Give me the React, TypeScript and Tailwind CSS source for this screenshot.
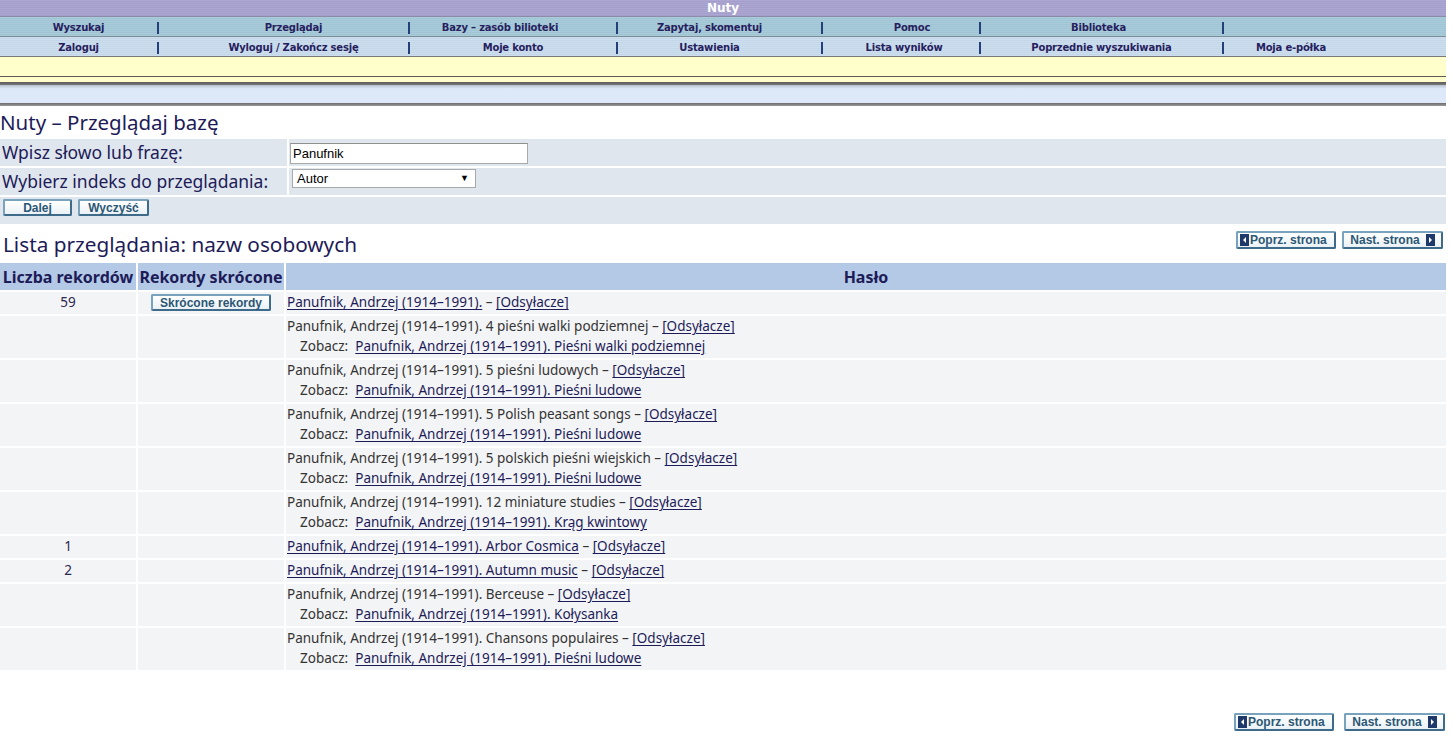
import { FC, ReactNode } from "react";

const navy = "text-[#1d1b58]";

const NAV_COLS = "grid grid-cols-[157px_251px_208px_205px_158px_243px_1fr]";

interface NavCell {
  label: string;
  pad: string;
}

const topNav: NavCell[] = [
  { label: "Wyszukaj", pad: "" },
  { label: "Przeglądaj", pad: "pl-[20px]" },
  { label: "Bazy – zasób bilioteki", pad: "pr-[26px]" },
  { label: "Zapytaj, skomentuj", pad: "pr-[20px]" },
  { label: "Pomoc", pad: "pl-[22px]" },
  { label: "Biblioteka", pad: "pr-[6px]" },
  { label: "", pad: "" },
];

const bottomNav: NavCell[] = [
  { label: "Zaloguj", pad: "" },
  { label: "Wyloguj / Zakończ sesję", pad: "pl-[20px]" },
  { label: "Moje konto", pad: "" },
  { label: "Ustawienia", pad: "pr-[20px]" },
  { label: "Lista wyników", pad: "pl-[6px]" },
  { label: "Poprzednie wyszukiwania", pad: "" },
  { label: "Moja e-półka", pad: "pr-[88px]" },
];

const NavRow: FC<{ cells: NavCell[]; bg: string }> = ({ cells, bg }) => (
  <div className={`${NAV_COLS} h-[19px] ${bg}`}>
    {cells.map((c, i) => (
      <div key={i} className="flex items-center h-full pt-[2px]">
        {i > 0 && <span className="w-[2px] h-[12px] bg-[#24407a] shrink-0" />}
        <span
          className={`flex-1 flex justify-center ${c.pad} font-bold text-[10px] leading-none text-[#26215e] font-['DejaVu_Sans',sans-serif] tracking-[-0.2px]`}
        >
          {c.label}
        </span>
      </div>
    ))}
  </div>
);

const BlueButton: FC<{ children: ReactNode; className?: string }> = ({
  children,
  className = "",
}) => (
  <button
    className={`h-[17px] flex items-center justify-center border-2 border-[#79a2bd] border-b-[#3d6b89] border-r-[#3d6b89] bg-[linear-gradient(#ffffff,#eaf1f6)] rounded-[2px] font-bold text-[12px] leading-none text-[#2c5775] font-['Liberation_Sans',Arial,sans-serif] ${className}`}
  >
    {children}
  </button>
);

const Arrow: FC<{ dir: "left" | "right" }> = ({ dir }) => (
  <svg width="9" height="12" viewBox="0 0 9 12" className="shrink-0">
    <rect width="9" height="12" fill="#1d3a6a" />
    {dir === "left" ? (
      <polygon points="6,3 6,9 3,6" fill="#ffffff" />
    ) : (
      <polygon points="3,3 3,9 6,6" fill="#ffffff" />
    )}
  </svg>
);

const PageButtons: FC<{ gap: string }> = ({ gap }) => (
  <div className={`flex ${gap}`}>
    <BlueButton className="w-[100px] h-[18px] gap-[1px] pl-[2px] justify-start">
      <Arrow dir="left" />
      <span>Poprz. strona</span>
    </BlueButton>
    <BlueButton className="w-[101px] h-[18px] gap-[6px]">
      <span>Nast. strona</span>
      <Arrow dir="right" />
    </BlueButton>
  </div>
);

const L: FC<{ children: ReactNode }> = ({ children }) => (
  <a className="text-[#1d1b58] underline underline-offset-2 cursor-pointer">{children}</a>
);

interface Entry {
  count?: string;
  short?: boolean;
  head: string;
  linked: boolean;
  see?: string;
}

const P = "Panufnik, Andrzej (1914–1991).";

const entries: Entry[] = [
  { count: "59", short: true, head: P, linked: true },
  { head: `${P} 4 pieśni walki podziemnej`, linked: false, see: `${P} Pieśni walki podziemnej` },
  { head: `${P} 5 pieśni ludowych`, linked: false, see: `${P} Pieśni ludowe` },
  { head: `${P} 5 Polish peasant songs`, linked: false, see: `${P} Pieśni ludowe` },
  { head: `${P} 5 polskich pieśni wiejskich`, linked: false, see: `${P} Pieśni ludowe` },
  { head: `${P} 12 miniature studies`, linked: false, see: `${P} Krąg kwintowy` },
  { count: "1", head: `${P} Arbor Cosmica`, linked: true },
  { count: "2", head: `${P} Autumn music`, linked: true },
  { head: `${P} Berceuse`, linked: false, see: `${P} Kołysanka` },
  { head: `${P} Chansons populaires`, linked: false, see: `${P} Pieśni ludowe` },
];

const cell = "bg-[#f3f4f6]";

export default function App() {
  return (
    <div className="w-[1446px] bg-white min-h-[737px] font-['Noto_Sans',sans-serif]">
      {/* header bars */}
      <div className="h-[17px] border-b border-[#8d8aa8] flex items-center justify-center bg-[repeating-linear-gradient(180deg,#aca8d3_0px,#aca8d3_1px,#a39fca_1px,#a39fca_2px)]">
        <span className="text-white font-bold text-[12px] font-['DejaVu_Sans',sans-serif] leading-none">
          Nuty
        </span>
      </div>
      <div className="border-b border-[#7d8b93]">
        <NavRow
          cells={topNav}
          bg="bg-[repeating-linear-gradient(180deg,#a9ccdb_0px,#a9ccdb_1px,#a0c4d4_1px,#a0c4d4_2px)]"
        />
      </div>
      <div className="border-b border-[#77797b]">
        <NavRow
          cells={bottomNav}
          bg="bg-[repeating-linear-gradient(180deg,#cddfee_0px,#cddfee_1px,#c4d7e8_1px,#c4d7e8_2px)]"
        />
      </div>
      <div className="h-[20px] bg-[#ffffcc] border-b border-[#5d5d55]" />
      <div className="h-[5px] bg-[#ffffcc]" />
      <div className="h-[3px] bg-[linear-gradient(#5a5a5a,#7a7a7a)]" />
      <div className="h-[18px] bg-[linear-gradient(#b4c0ce,#dde9f8_20%,#dde9f8)]" />
      <div className="h-[3px] bg-[linear-gradient(#6b6b6b,#9a9a9a)]" />

      {/* title */}
      <div className="h-[33px] flex items-center">
        <h1 className={`text-[20.5px] ${navy} leading-none`}>Nuty – Przeglądaj bazę</h1>
      </div>

      {/* form */}
      <div className="grid grid-cols-[287px_1fr] gap-[2px]">
        <div className="h-[27px] bg-[#dfe6ee] flex items-center pl-[2px]">
          <span className={`text-[17.5px] leading-none ${navy}`}>Wpisz słowo lub frazę:</span>
        </div>
        <div className="h-[27px] bg-[#dfe6ee] pt-[1px] pl-[1px]">
          <input
            defaultValue="Panufnik"
            className="w-[238px] h-[21px] bg-white border border-[#a9a9a9] border-t-[#8f8f8f] px-[2px] text-[13px] text-black font-['Liberation_Sans',Arial,sans-serif] outline-none"
          />
        </div>
        <div className="h-[27px] bg-[#dfe6ee] flex items-center pl-[2px]">
          <span className={`text-[17.5px] leading-none ${navy}`}>Wybierz indeks do przeglądania:</span>
        </div>
        <div className="h-[27px] bg-[#dfe6ee] pt-[1px] pl-[3px]">
          <div className="w-[184px] h-[19px] bg-white border border-[#a9a9a9] flex items-center justify-between pl-[4px] pr-[6px] text-[13px] text-black font-['Liberation_Sans',Arial,sans-serif]">
            <span>Autor</span>
            <span className="text-[9px]">▼</span>
          </div>
        </div>
        <div className="col-span-2 h-[27px] bg-[#dfe6ee] flex items-start pt-[2px] pl-[3px] gap-[6px]">
          <BlueButton className="w-[69px]">Dalej</BlueButton>
          <BlueButton className="w-[71px]">Wyczyść</BlueButton>
        </div>
      </div>

      {/* list heading */}
      <div className="h-[39px] flex justify-between">
        <h2 className={`text-[20.75px] ${navy} leading-none pt-[10px] pl-[3px]`}>
          Lista przeglądania: nazw osobowych
        </h2>
        <div className="pt-[7px] pr-[3px]">
          <PageButtons gap="gap-[6px]" />
        </div>
      </div>

      {/* results table */}
      <div className="grid grid-cols-[136px_146px_1fr] gap-[2px]">
        <div className="h-[27px] bg-[#b3c9e5] flex items-center justify-center">
          <span className={`font-bold text-[16px] ${navy}`}>Liczba rekordów</span>
        </div>
        <div className="h-[27px] bg-[#b3c9e5] flex items-center justify-center">
          <span className={`font-bold text-[16px] ${navy}`}>Rekordy skrócone</span>
        </div>
        <div className="h-[27px] bg-[#b3c9e5] flex items-center justify-center">
          <span className={`font-bold text-[16px] ${navy}`}>Hasło</span>
        </div>

        {entries.map((e, i) => (
          <div key={i} className="contents text-[13.5px] leading-[20px]">
            <div className={`${cell} text-center text-[#2c2750]`}>{e.count}</div>
            <div className={`${cell} flex justify-center items-start pt-[2px]`}>
              {e.short && <BlueButton className="w-[120px]">Skrócone rekordy</BlueButton>}
            </div>
            <div className={`${cell} pb-[2px] pl-[1px] text-[#333333]`}>
              <div>
                {e.linked ? <L>{e.head}</L> : e.head} – <L>[Odsyłacze]</L>
              </div>
              {e.see && (
                <div className="pl-[13px]">
                  Zobacz:&nbsp;&nbsp;<L>{e.see}</L>
                </div>
              )}
            </div>
          </div>
        ))}
      </div>

      {/* bottom paging */}
      <div className="flex justify-end pt-[43px] pr-[1px]">
        <PageButtons gap="gap-[10px]" />
      </div>
    </div>
  );
}
